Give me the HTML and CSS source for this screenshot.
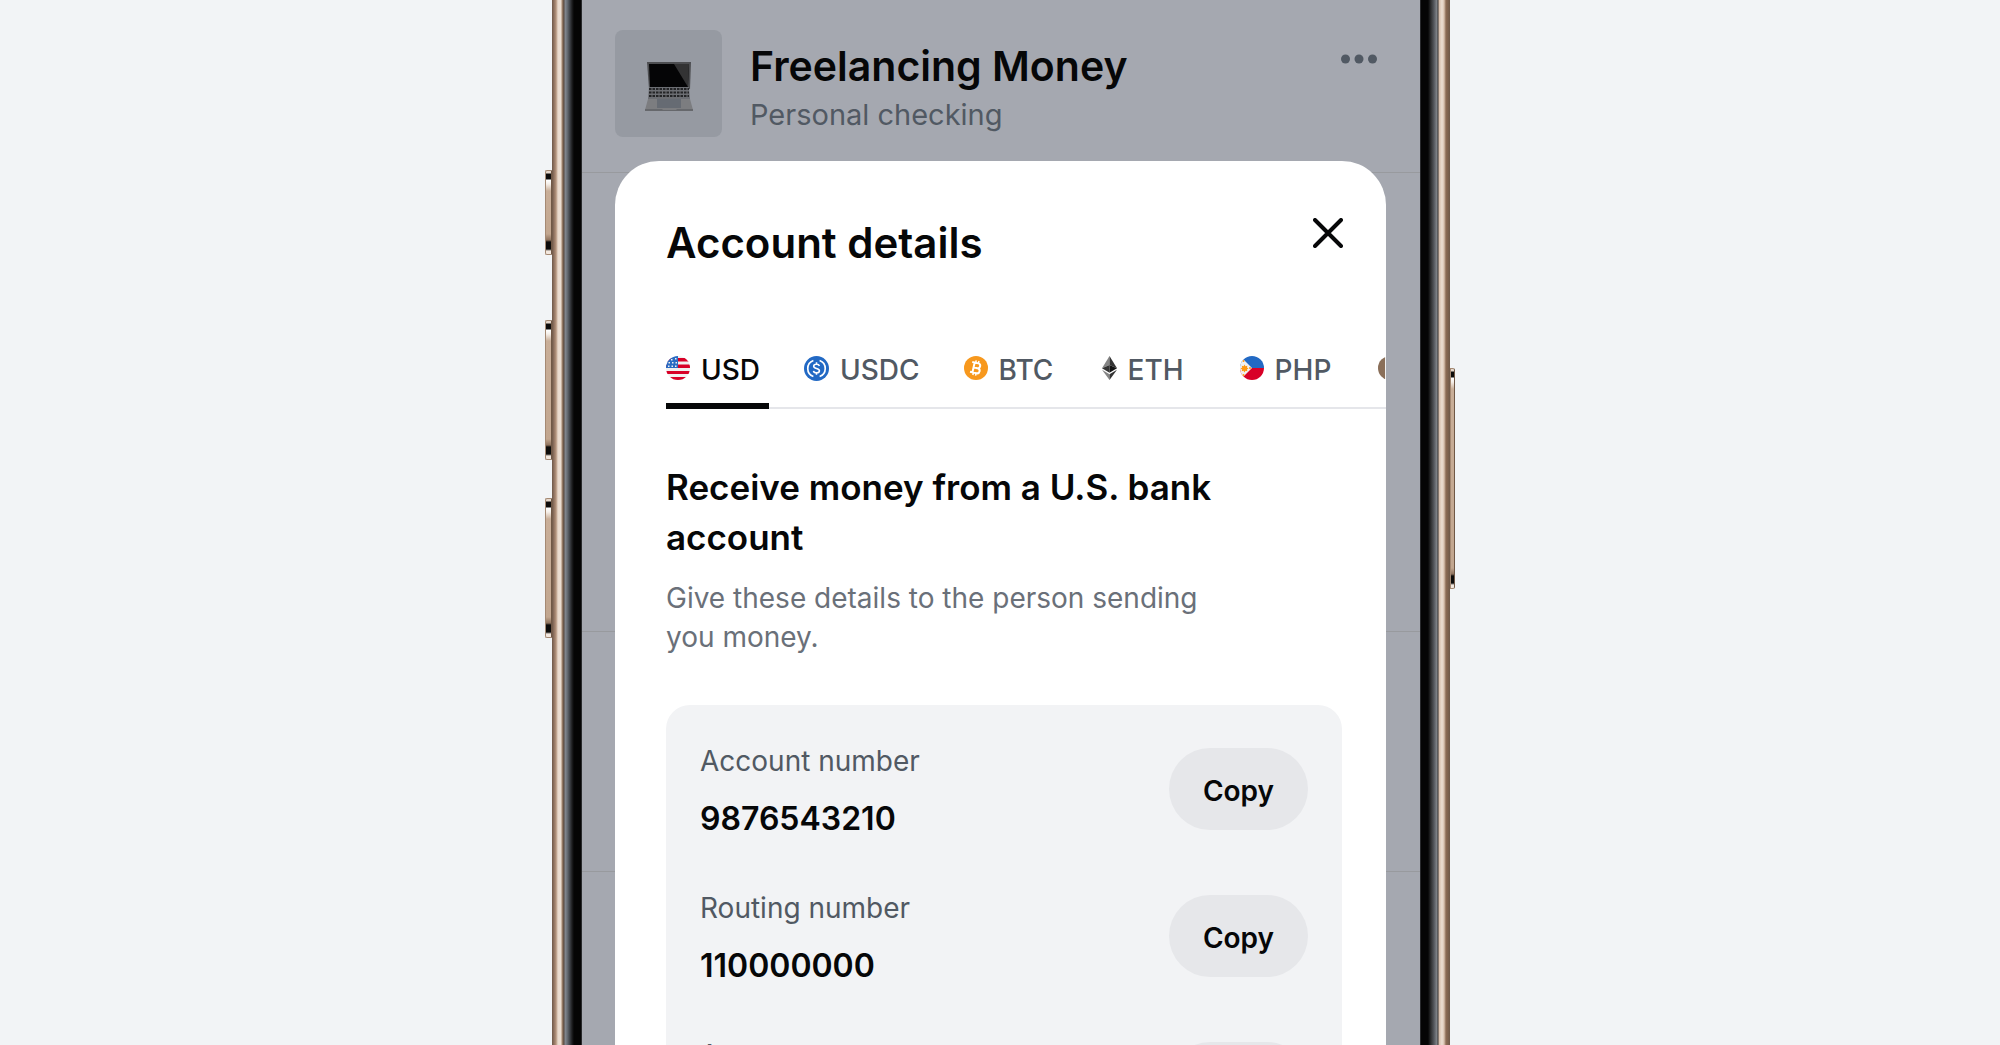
FILE: index.html
```html
<!DOCTYPE html>
<html lang="en">
<head>
    <meta charset="UTF-8">
    <meta name="viewport" content="width=device-width, initial-scale=1.0">
    <title>Account details</title>
    <link rel="stylesheet" href="styles.css">
</head>
<body>
    <div class="stage">
        <div class="phone">
            <span class="side-button action"></span>
            <span class="side-button volume-up"></span>
            <span class="side-button volume-down"></span>
            <span class="side-button power"></span>
            <div class="screen">
                <header class="account-header">
                    <div class="account-icon">
                        <svg width="48" height="49" viewBox="0 0 48 49" aria-hidden="true">
                            <path d="M2 0h44l-1 27H4z" fill="#4d4e51"/>
                            <path d="M4 2h40l-1 23H5z" fill="#050506"/>
                            <path d="M29 2h15l-1 23z" fill="#333334"/>
                            <path d="M4 25h40l1 12H3z" fill="#6c6e73"/>
                            <path d="M4 27h40M4 30.500h40M4 34h40" stroke="#242527" stroke-width="2" stroke-dasharray="2.500 1"/>
                            <path d="M3 37h42l3 11H0z" fill="#7c7d80"/>
                            <path d="M12 37h24v9H12z" fill="#666b73"/>
                            <path d="M0 47h17l1 1h13l1-1h16v2H0z" fill="#66686c"/>
                        </svg>
                    </div>
                    <div class="account-name">
                        <h1>Freelancing Money</h1>
                        <p>Personal checking</p>
                    </div>
                    <button class="more-button" type="button" aria-label="More options">
                        <svg width="36" height="10" viewBox="0 0 36 10" fill="#515963">
                            <circle cx="4.500" cy="5" r="4.500"/><circle cx="18" cy="5" r="4.500"/><circle cx="31.500" cy="5" r="4.500"/>
                        </svg>
                    </button>
                </header>
                <!-- Page sections dimmed behind the sheet -->
                <div class="section section-large"></div>
                <div class="section section-small"></div>
                <div class="section section-rest"></div>

                <main class="sheet">
                    <div class="sheet-header">
                        <h2>Account details</h2>
                        <button class="close-button" type="button" aria-label="Close">
                            <svg width="30" height="30" viewBox="0 0 30 30" fill="none" stroke="#060708" stroke-width="4" stroke-linecap="round">
                                <path d="M2 2l26 26M28 2L2 28"/>
                            </svg>
                        </button>
                    </div>

                    <div class="tabs" role="tablist" aria-label="Currency">
                        <button class="tab active" type="button" role="tab" aria-selected="true">
                            <svg width="24" height="24" viewBox="0 0 24 24" aria-hidden="true">
                                <clipPath id="us"><circle cx="12" cy="12" r="12"/></clipPath>
                                <g clip-path="url(#us)">
                                    <path d="M0 0h24v24H0z" fill="#f0f0f0"/>
                                    <path d="M0 2h24v3.500H0zM0 8.500h24V12H0zM0 15h24v3H0zM0 21h24v3H0z" fill="#d80027"/>
                                    <path d="M0 0h12v12H0z" fill="#2a6cc4"/>
                                    <path d="M5 3h1.500v1.500H5zM9 2h1.500v1.500H9zM2.500 6H4v1.500H2.500zM6 6h1.500v1.500H6zM9.500 6H11v1.500H9.500zM2 9.500h1.500V11H2zM5.500 9.500H7V11H5.500zM9 9.500h1.500V11H9z" fill="#f0f0f0"/>
                                </g>
                            </svg>
                            <span>USD</span>
                        </button>
                        <button class="tab" type="button" role="tab" aria-selected="false">
                            <svg width="25" height="25" viewBox="0 0 24 24" fill="none" aria-hidden="true">
                                <circle cx="12" cy="12" r="12" fill="#2269c4"/>
                                <path d="M9 4.300a8.200 8.200 0 0 0 0 15.400M15 4.300a8.200 8.200 0 0 1 0 15.400" stroke="#fff" stroke-width="1.600"/>
                                <path d="M14.800 9.600C14.500 8.500 13.500 8 12 8c-1.700 0-2.700.8-2.700 1.900 0 2.900 5.500 1.200 5.500 4.200 0 1.200-1.100 2-2.800 2-1.600 0-2.700-.7-2.900-1.900M12 6v2M12 16v2" stroke="#fff" stroke-width="1.500"/>
                            </svg>
                            <span>USDC</span>
                        </button>
                        <button class="tab" type="button" role="tab" aria-selected="false">
                            <svg width="24" height="24" viewBox="0 0 24 24" fill="none" aria-hidden="true">
                                <circle cx="12" cy="12" r="12" fill="#f7981d"/>
                                <g transform="rotate(13 12 12)" stroke="#fff" stroke-width="2">
                                    <path d="M7 7h6.200a2.400 2.400 0 0 1 0 4.900H9.500M7 17h6.700a2.500 2.500 0 0 0 0-5.100M9.500 7v10"/>
                                    <path d="M10.500 4.500V7M13.300 4.500V7M10.500 17v2.500M13.300 17v2.500" stroke-width="1.500"/>
                                </g>
                            </svg>
                            <span>BTC</span>
                        </button>
                        <button class="tab" type="button" role="tab" aria-selected="false">
                            <svg width="15" height="24" viewBox="0 0 15 24" aria-hidden="true">
                                <path d="M7.500 0L0 12.300l7.500-3.400z" fill="#858585"/>
                                <path d="M7.500 0L15 12.300 7.500 8.900z" fill="#343434"/>
                                <path d="M7.500 8.900L0 12.300l7.500 4.400z" fill="#343434"/>
                                <path d="M7.500 8.900l7.500 3.400-7.500 4.400z" fill="#141414"/>
                                <path d="M0 13.800l7.500 4.400V24z" fill="#858585"/>
                                <path d="M15 13.800l-7.500 4.400V24z" fill="#343434"/>
                            </svg>
                            <span>ETH</span>
                        </button>
                        <button class="tab" type="button" role="tab" aria-selected="false">
                            <svg width="24" height="24" viewBox="0 0 24 24" aria-hidden="true">
                                <clipPath id="ph"><circle cx="12" cy="12" r="12"/></clipPath>
                                <g clip-path="url(#ph)">
                                    <path d="M0 0h24v12H0z" fill="#2269c4"/>
                                    <path d="M0 12h24v12H0z" fill="#d80027"/>
                                    <path d="M0 0l12 12L0 24z" fill="#f0f0f0"/>
                                    <path d="M4.500 8.500l1 1.700 1.900-.5-.5 1.900 1.600.9-1.600 1 .5 1.800-1.900-.5-1 1.700-1-1.700-1.800.5.500-1.800-1.700-1 1.700-.9-.5-1.900 1.800.5z" fill="#ff9811"/>
                                    <circle cx="3.500" cy="5" r="1" fill="#ff9811"/><circle cx="3.500" cy="19" r="1" fill="#ff9811"/><circle cx="10" cy="12" r="1" fill="#ff9811"/>
                                </g>
                            </svg>
                            <span>PHP</span>
                        </button>
                        <button class="tab" type="button" role="tab" aria-selected="false" aria-label="More currencies">
                            <svg width="24" height="24" viewBox="0 0 24 24" aria-hidden="true">
                                <clipPath id="more"><circle cx="12" cy="12" r="12"/></clipPath>
                                <g clip-path="url(#more)">
                                    <path d="M0 0h24v24H0z" fill="#f0f0f0"/>
                                    <path d="M0 0h7v24H0z" fill="#8a6f59"/>
                                    <circle cx="10" cy="11" r="2" fill="#ff9811"/>
                                </g>
                            </svg>
                        </button>
                    </div>

                    <section class="sheet-body">
                        <h3>Receive money from a U.S. bank<br>account</h3>
                        <p class="intro">Give these details to the person sending<br>you money.</p>

                        <div class="details">
                            <div class="detail-row">
                                <dl>
                                    <dt>Account number</dt>
                                    <dd>9876543210</dd>
                                </dl>
                                <button class="copy-button" type="button">Copy</button>
                            </div>
                            <div class="detail-row">
                                <dl>
                                    <dt>Routing number</dt>
                                    <dd>110000000</dd>
                                </dl>
                                <button class="copy-button" type="button">Copy</button>
                            </div>
                            <div class="detail-row">
                                <dl>
                                    <dt>Account type</dt>
                                    <dd>Checking</dd>
                                </dl>
                                <button class="copy-button" type="button">Copy</button>
                            </div>
                        </div>
                    </section>
                </main>
            </div>
        </div>
    </div>
</body>
</html>
```

FILE: styles.css
```css
* {
    box-sizing: border-box;
}
body {
    margin: 0;
    background: #f2f4f6;
    color: #060708;
    font-family: Inter, "Liberation Sans", sans-serif;
}
h1, h2, h3, p, dl, dd {
    margin: 0;
}
button {
    padding: 0;
    border: 0;
    background: none;
    color: inherit;
    font-family: inherit;
    cursor: pointer;
}
svg {
    display: block;
    flex-shrink: 0;
}
.stage {
    height: 100vh;
    padding-left: 2px;
    overflow: hidden;
}

/* Phone body, metal edges are drawn with the gradient */
.phone {
    position: relative;
    width: 100%;
    max-width: 898px;
    min-height: 100%;
    margin: 0 auto;
    padding: 0 30px;
    background: linear-gradient(to right,
        #6e5848 0, #8f7260 2px, #b3937c 4px, #e9dacd 6px, #ecdfd4 9px, #a5876f 10px, #55473e 12px,
        #858a92 13px, #6c7178 15px, #3c3f44 18px, #1d1e20 20px, #050505 22px, #050505 29px, #4c4e53 30px,
        #4c4e53 calc(100% - 30px), #050505 calc(100% - 29px), #050505 calc(100% - 22px), #303132 calc(100% - 19px),
        #55585d calc(100% - 16px), #83878c calc(100% - 13px), #33302f calc(100% - 12px), #d5bda9 calc(100% - 11px),
        #ecdfd4 calc(100% - 8px), #d9c3b1 calc(100% - 6px), #8b6b54 calc(100% - 4px), #6e5848 100%);
}
.side-button {
    position: absolute;
    left: -7px;
    width: 7px;
    border: 1px solid #a58973;
    border-right-color: #705846;
    border-radius: 2px 0 0 2px;
    background: linear-gradient(to bottom,
        #e6d8cc 0, #e6d8cc 2px, #0c0b0a 3px, #0c0b0a 8px, #fff 9px, #f5efe9 13px, #c9ae98 20px,
        #c2a68f calc(100% - 20px), #8f735e calc(100% - 14px), #0c0b0a calc(100% - 12px), #0c0b0a calc(100% - 5px), #f3e8df calc(100% - 3px));
}
.action {
    top: 170px;
    height: 85px;
}
.volume-up {
    top: 320px;
    height: 140px;
}
.volume-down {
    top: 498px;
    height: 140px;
}
.power {
    top: 368px;
    right: -5px;
    left: auto;
    width: 5px;
    height: 221px;
    border-radius: 0 2px 2px 0;
}

.screen {
    position: relative;
    min-height: 100vh;
    background: #a5a8b0;
}
.account-header {
    display: flex;
    align-items: flex-start;
    gap: 28px;
    height: 172px;
    padding: 30px 43px 0 33px;
}
.account-icon {
    display: grid;
    place-items: center;
    width: 107px;
    height: 107px;
    padding-top: 6px;
    border-radius: 8px;
    background: #969aa2;
}
.account-name {
    flex: 1;
    padding-top: 8px;
}
.account-name h1 {
    font-size: 41px;
    font-weight: 600;
    line-height: 57px;
}
.account-name p {
    color: #515963;
    font-size: 29px;
    line-height: 40px;
}
.more-button {
    padding: 24px 0 10px;
}
.section {
    border-top: 1px solid #989a9e;
}
.section-large {
    height: 459px;
}
.section-small {
    height: 240px;
}

/* Sheet on top of the account page */
.sheet {
    position: absolute;
    top: 161px;
    right: 34px;
    left: 33px;
    overflow: hidden;
    border-radius: 44px 44px 0 0;
    background: #fff;
}
.sheet-header {
    display: flex;
    align-items: flex-start;
    justify-content: space-between;
    padding: 54px 43px 0 51px;
}
.sheet-header h2 {
    font-size: 42px;
    font-weight: 600;
    line-height: 56px;
}
.close-button {
    padding-top: 3px;
}
.tabs {
    display: flex;
    gap: 35px;
    height: 86px;
    margin: 52px 0 0 51px;
    box-shadow: inset 0 -2px #e5e6ea;
}
.tab {
    display: flex;
    flex-shrink: 0;
    align-items: center;
    gap: 11px;
    min-width: 103px;
    padding: 10px 9px 0 0;
    border-bottom: 6px solid transparent;
    color: #515963;
    font-size: 28px;
    font-weight: 500;
}
.tab span {
    padding-top: 3px;
}
.tab.active {
    border-bottom-color: #060708;
    color: #060708;
}
.sheet-body {
    padding: 53px 44px 0 51px;
}
.sheet-body h3 {
    font-size: 35px;
    font-weight: 600;
    line-height: 50px;
}
.intro {
    margin-top: 17px;
    color: #6a7079;
    font-size: 28px;
    line-height: 39px;
}
.details {
    display: grid;
    gap: 65px;
    margin-top: 48px;
    padding: 43px 34px;
    border-radius: 24px;
    background: #f2f3f5;
}
.detail-row {
    display: flex;
    justify-content: space-between;
    height: 82px;
}
.detail-row dt {
    color: #515963;
    font-size: 28px;
    line-height: 26px;
}
.detail-row dd {
    margin-top: 25px;
    font-size: 32px;
    font-weight: 600;
    line-height: 40px;
}
.copy-button {
    width: 139px;
    height: 82px;
    padding-top: 4px;
    border-radius: 41px;
    background: #e6e7ea;
    font-size: 28px;
    font-weight: 600;
}
```
